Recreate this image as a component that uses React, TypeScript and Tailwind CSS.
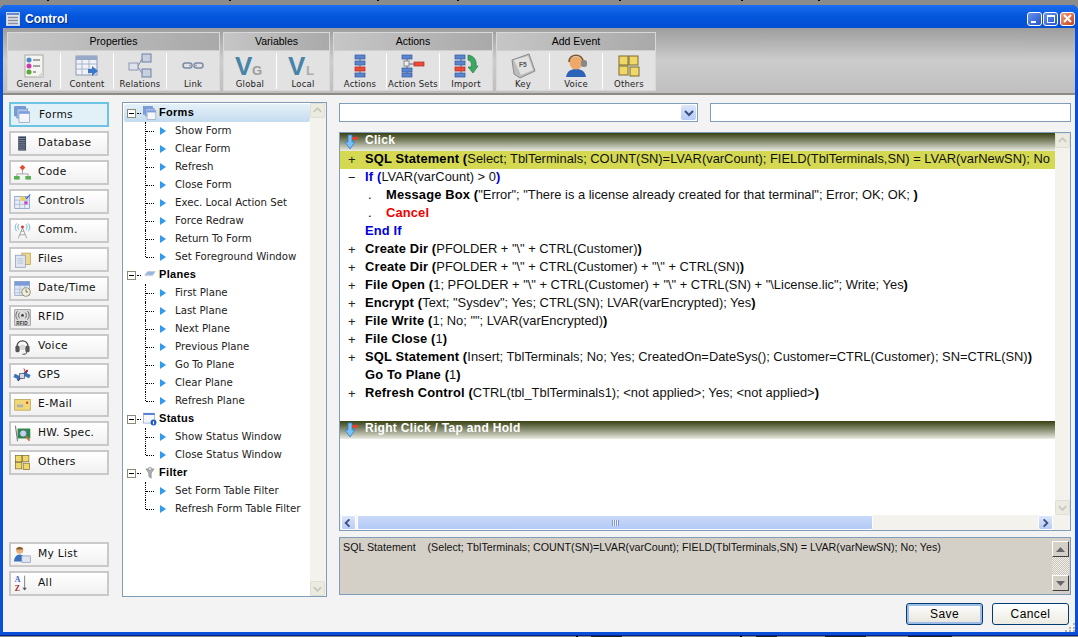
import React from "react";

const Ic = ({ s = 24, children }: { s?: number; children: React.ReactNode }) => (
  <svg width={s} height={s} viewBox="0 0 24 24" className="shrink-0 overflow-visible">{children}</svg>
);

const Bar = ({ x, y, w = 10, c = "#5b86cf" }: { x: number; y: number; w?: number; c?: string }) => (
  <rect x={x} y={y} width={w} height="4" fill={c} stroke={c === "#5b86cf" ? "#34589c" : "#b02a20"} strokeWidth="0.7" />
);

const icons: Record<string, React.ReactNode> = {
  general: (
    <Ic>
      <rect x="3" y="1" width="18" height="22" fill="#f4f4f0" stroke="#a8a8a0" />
      <circle cx="7" cy="6" r="2.5" fill="#4a8ac8" /><circle cx="7" cy="12" r="2.5" fill="#d03aa8" /><circle cx="7" cy="18" r="2.5" fill="#58a838" />
      <path d="M11 6h7M11 12h7M11 18h3" stroke="#555" strokeWidth="1.2" />
      <path d="M15 23l6-6v6z" fill="#d8d8d0" />
    </Ic>
  ),
  content: (
    <Ic>
      <rect x="1" y="2" width="21" height="19" fill="#f0f2f8" stroke="#8a9ab8" />
      <rect x="1" y="2" width="21" height="4" fill="#98a8c8" />
      <path d="M1 10h21M1 15h21M7 6v15M14 6v15" stroke="#a8b4cc" />
      <path d="M13 15h4v-3l6 5-6 5v-3h-4z" fill="#3a78c8" />
    </Ic>
  ),
  relations: (
    <Ic>
      <rect x="14" y="0" width="9" height="8" fill="#c8d0e0" stroke="#6a82a8" /><rect x="1" y="9" width="9" height="7" fill="#dde2ec" stroke="#8a98b0" /><rect x="14" y="15" width="9" height="8" fill="#c8d0e0" stroke="#6a82a8" />
      <path d="M10 12L14 5M10 13l4 6" stroke="#7a8aa8" />
    </Ic>
  ),
  link: (
    <Ic>
      <rect x="2" y="9" width="9" height="5" rx="2.5" fill="none" stroke="#7a8aa8" strokeWidth="1.5" />
      <rect x="13" y="9" width="9" height="5" rx="2.5" fill="none" stroke="#7a8aa8" strokeWidth="1.5" />
      <path d="M8 11.5h8" stroke="#a0a8b8" strokeWidth="1.5" />
    </Ic>
  ),
  actions: (
    <Ic>
      <path d="M12 1v22" stroke="#4a6aa8" /><Bar x={7} y={1} /><Bar x={7} y={7} /><Bar x={7} y={13} c="#ee4a38" /><Bar x={7} y={19} />
    </Ic>
  ),
  actionsets: (
    <Ic>
      <path d="M6 1v22M6 10h8" stroke="#4a6aa8" /><Bar x={1} y={1} /><Bar x={1} y={14} /><Bar x={1} y={19} /><Bar x={13} y={8} w={10} c="#ee4a38" />
      <rect x="3" y="7" width="5" height="5" fill="#eee" stroke="#888" />
    </Ic>
  ),
  import: (
    <Ic>
      <path d="M7 1v22" stroke="#4a6aa8" /><Bar x={1} y={1} /><Bar x={1} y={7} /><Bar x={1} y={13} c="#ee4a38" /><Bar x={1} y={19} />
      <path d="M14 1c6 1 9 5 8 11l2 0-5 7-5-6h3c1-4 0-6-3-7z" fill="#3aa860" stroke="#1f7038" strokeWidth="0.6" />
    </Ic>
  ),
  key: (
    <Ic>
      <path d="M1 6L18 0l6 17-15 7-6-4z" fill="#bcbcbc" stroke="#8a8a8a" />
      <path d="M3 6L17 2l5 14-12 5z" fill="#e2e2e2" />
      <text x="8" y="13" fontSize="6.5" fontWeight="700" fill="#555" fontFamily="Liberation Sans, sans-serif">F5</text>
    </Ic>
  ),
  voice: (
    <Ic>
      <path d="M2 23c1-6 5-8 10-8s9 2 10 8z" fill="#2a62b8" />
      <circle cx="12" cy="9" r="6.5" fill="#f0a868" />
      <path d="M5 8c0-9 14-9 14 0" fill="none" stroke="#7a5a28" strokeWidth="1.6" />
      <rect x="17" y="6" width="6" height="7" rx="2.5" fill="#888" />
    </Ic>
  ),
  others: (
    <Ic>
      <rect x="2" y="2" width="9" height="9" fill="#f0d868" stroke="#7a6a30" /><rect x="12" y="2" width="9" height="9" fill="#f0d868" stroke="#7a6a30" /><rect x="2" y="12" width="9" height="9" fill="#f0d868" stroke="#7a6a30" /><rect x="13" y="13" width="9" height="9" fill="#f0d868" stroke="#7a6a30" />
    </Ic>
  ),
  vg: (
    <Ic>
      <text x="-3" y="21" fontSize="26" fontWeight="700" fill="#4684a8" fontFamily="Liberation Sans, sans-serif">V</text>
      <text x="14" y="21" fontSize="13" fontWeight="700" fill="#9c9c9c" fontFamily="Liberation Sans, sans-serif">G</text>
    </Ic>
  ),
  vl: (
    <Ic>
      <text x="-3" y="21" fontSize="26" fontWeight="700" fill="#4684a8" fontFamily="Liberation Sans, sans-serif">V</text>
      <text x="15" y="21" fontSize="13" fontWeight="700" fill="#acacac" fontFamily="Liberation Sans, sans-serif">L</text>
    </Ic>
  ),
  forms: (
    <Ic>
      <rect x="1" y="1" width="15" height="13" fill="#7a9ee0" stroke="#5a7ab8" /><rect x="4" y="4" width="15" height="13" fill="#a8c0ec" stroke="#6a8ac8" /><rect x="7" y="8" width="15" height="15" fill="#f4f6fa" stroke="#8a9ab8" /><rect x="7" y="8" width="15" height="3" fill="#7a9ee0" />
    </Ic>
  ),
  database: (
    <Ic>
      <rect x="6" y="2" width="11" height="20" fill="#3a4458" />
      <path d="M7 5h9M7 8h9M7 11h9M7 14h9M7 17h9M7 20h9" stroke="#9aa8c0" />
    </Ic>
  ),
  code: (
    <Ic>
      <path d="M12 8v6M4 18v-4h16v4" fill="none" stroke="#888" />
      <path d="M12 1l4 4-4 4-4-4z" fill="#e84a30" />
      <rect x="0" y="17" width="8" height="5" fill="#58b050" /><rect x="16" y="17" width="8" height="5" fill="#58b050" />
    </Ic>
  ),
  controls: (
    <Ic>
      <rect x="1" y="5" width="21" height="17" fill="#e8ecf6" stroke="#7a92c0" />
      <path d="M1 10h21M8 10v12M15 10v12M1 16h21" stroke="#a0b0d0" />
      <path d="M8 7l5-3 3 5-4 3z" fill="#f0d040" /><path d="M14 13l4-2 2 3-4 3z" fill="#c848c8" /><path d="M16 6l2 2 5-6" fill="none" stroke="#3a6ac8" strokeWidth="1.6" />
    </Ic>
  ),
  comm: (
    <Ic>
      <path d="M12 8L6 23M12 8l6 15M8 18h8M10 13h4" stroke="#8a8a8a" fill="none" />
      <circle cx="12" cy="7" r="2" fill="#e03020" />
      <path d="M7 3c-2 2-2 6 0 8M4 2c-3 3-3 8 0 11M17 3c2 2 2 6 0 8M20 2c3 3 3 8 0 11" fill="none" stroke="#58a8d8" strokeWidth="1.2" />
    </Ic>
  ),
  files: (
    <Ic>
      <rect x="11" y="3" width="12" height="16" fill="#f0d890" stroke="#b09848" />
      <rect x="2" y="6" width="14" height="17" fill="#dfe6f2" stroke="#8a98b4" />
      <path d="M5 11h8M5 14h8M5 17h8" stroke="#a8b4c8" />
    </Ic>
  ),
  date: (
    <Ic>
      <rect x="1" y="2" width="21" height="20" fill="#dfe6f4" stroke="#8a9ac0" /><rect x="1" y="2" width="21" height="6" fill="#7a9ad8" />
      <path d="M1 13h21M1 18h21M8 8v14M15 8v14" stroke="#aebad4" />
      <circle cx="17" cy="17" r="6" fill="#f0f0e0" stroke="#807038" /><path d="M17 13v4h3" stroke="#444" fill="none" />
    </Ic>
  ),
  rfid: (
    <Ic>
      <rect x="1" y="1" width="22" height="22" fill="#dcdcdc" stroke="#888" />
      <circle cx="12" cy="9" r="2" fill="#444" />
      <path d="M8 5c-2 2-2 6 0 8M5 3c-3 3-3 9 0 12M16 5c2 2 2 6 0 8M19 3c3 3 3 9 0 12" fill="none" stroke="#555" strokeWidth="1.2" />
      <text x="3" y="22" fontSize="6.5" fontWeight="700" fill="#333" fontFamily="Liberation Sans, sans-serif">RFID</text>
    </Ic>
  ),
  headset: (
    <Ic>
      <path d="M4 13C4 1 20 1 20 13" fill="none" stroke="#444" strokeWidth="2" />
      <rect x="2" y="11" width="6" height="9" rx="2" fill="#555" /><rect x="16" y="11" width="6" height="9" rx="2" fill="#555" />
      <path d="M18 20c0 3-4 3-6 3" fill="none" stroke="#444" strokeWidth="1.4" />
      <circle cx="12" cy="13" r="4" fill="#d8d8d8" />
    </Ic>
  ),
  gps: (
    <Ic>
      <path d="M5 19L19 5" stroke="#2a3a78" strokeWidth="3" />
      <rect x="0" y="11" width="9" height="5" transform="rotate(25 4 13)" fill="#3a70c0" /><rect x="14" y="9" width="9" height="5" transform="rotate(25 18 11)" fill="#3a70c0" />
      <path d="M14 2l2 5 4-3" fill="none" stroke="#d83020" strokeWidth="1.4" />
      <rect x="8" y="9" width="7" height="7" fill="#d8d8e0" stroke="#445" />
    </Ic>
  ),
  mail: (
    <Ic>
      <rect x="1" y="5" width="22" height="15" fill="#f0d878" stroke="#b09848" /><rect x="4" y="12" width="9" height="4" fill="#b0b0b0" /><rect x="17" y="8" width="3" height="3" fill="#d84020" />
    </Ic>
  ),
  hw: (
    <Ic>
      <path d="M2 1l3 22" stroke="#777" strokeWidth="1.5" />
      <rect x="5" y="5" width="18" height="14" fill="#2a8848" />
      <circle cx="13" cy="12" r="5" fill="#bcd4ec" stroke="#556" />
      <path d="M17 16l5 6" stroke="#c87038" strokeWidth="2.4" />
    </Ic>
  ),
  mylist: (
    <Ic>
      <circle cx="8" cy="6" r="5" fill="#e8b078" /><path d="M3 5c0-5 10-5 10 0z" fill="#806030" />
      <path d="M0 22c0-6 4-10 8-10s8 4 8 10z" fill="#3a70c0" />
      <rect x="11" y="14" width="12" height="9" fill="#dfe6f2" stroke="#8a98b4" />
    </Ic>
  ),
  az: (
    <Ic>
      <text x="1" y="10" fontSize="11" fontWeight="700" fill="#3a5ac0" fontFamily="Liberation Serif, serif">A</text>
      <text x="1" y="23" fontSize="11" fontWeight="700" fill="#a02828" fontFamily="Liberation Serif, serif">Z</text>
      <path d="M15 1v18" stroke="#555" /><path d="M12 18h6l-3 4z" fill="#555" />
    </Ic>
  ),
  plane: (
    <Ic>
      <path d="M3 12l5-6h13l-4 6z" fill="#9ab4dc" stroke="#b8c4dc" />
      <path d="M3 12h14v2H3z" fill="#c8d4e8" />
    </Ic>
  ),
  status: (
    <Ic>
      <rect x="1" y="2" width="19" height="17" fill="#f4f6fa" stroke="#7a92c8" /><rect x="1" y="2" width="19" height="3" fill="#4a78d0" />
      <circle cx="18" cy="18" r="5" fill="#1a5cc0" /><rect x="17" y="16" width="2" height="5" fill="#fff" />
    </Ic>
  ),
  filter: (
    <Ic>
      <path d="M5 5h14l-5 7v9l-4-3v-6z" fill="#b0b0b0" stroke="#777" />
      <circle cx="12" cy="5" r="3" fill="#dcdcdc" stroke="#888" />
    </Ic>
  ),
};

const ToolGroup = ({ title, w, items }: { title: string; w: string; items: [string, string][] }) => (
  <div className={`flex flex-col ${w} h-[59px] border border-[#d8d8d8] bg-[#e2e2e2]`}>
    <div className="h-[18px] bg-gradient-to-r from-[#c6c6c6] to-[#a9a9a9] border-b border-[#cfcfcf] flex items-center justify-center text-[10.5px] text-black leading-none shrink-0">
      {title}
    </div>
    <div className="flex flex-1 pt-[2px]">
      {items.map(([label, ic], i) => (
        <div key={label} className={`flex-1 flex flex-col items-center h-[36px] ${i < items.length - 1 ? "border-r border-white" : ""}`}>
          <div className="h-[25px] flex items-center shrink-0">{icons[ic]}</div>
          <div className="text-[8.5px] leading-[12px] tracking-[0.2px] text-[#222] font-['DejaVu_Sans',sans-serif] whitespace-nowrap">{label}</div>
        </div>
      ))}
    </div>
  </div>
);

const SideBtn = ({ label, ic, active, mt }: { label: string; ic: string; active?: boolean; mt?: string }) => (
  <div
    className={`w-[100px] h-[25px] border-2 flex items-center pl-[3px] gap-[6px] text-[10.7px] tracking-[0.3px] text-[#111] font-['DejaVu_Sans',sans-serif] shrink-0 ${mt ?? ""} ${
      active ? "border-[#6cc4e4] bg-[#e2f0f7]" : "border-[#c9c9c9] bg-gradient-to-b from-white to-[#f1f1f1]"
    }`}
  >
    <Ic s={17}>{(icons[ic] as React.ReactElement<{ children: React.ReactNode }>).props.children}</Ic>
    <span className={active ? "ml-[2px] pt-[2px]" : "ml-[1px]"}>{label}</span>
  </div>
);

const side: [string, string][] = [
  ["Forms", "forms"], ["Database", "database"], ["Code", "code"], ["Controls", "controls"], ["Comm.", "comm"],
  ["Files", "files"], ["Date/Time", "date"], ["RFID", "rfid"], ["Voice", "headset"], ["GPS", "gps"],
  ["E-Mail", "mail"], ["HW. Spec.", "hw"], ["Others", "others"],
];

const tree: { title: string; ic: string; items: string[] }[] = [
  { title: "Forms", ic: "forms", items: ["Show Form", "Clear Form", "Refresh", "Close Form", "Exec. Local Action Set", "Force Redraw", "Return To Form", "Set Foreground Window"] },
  { title: "Planes", ic: "plane", items: ["First Plane", "Last Plane", "Next Plane", "Previous Plane", "Go To Plane", "Clear Plane", "Refresh Plane"] },
  { title: "Status", ic: "status", items: ["Show Status Window", "Close Status Window"] },
  { title: "Filter", ic: "filter", items: ["Set Form Table Filter", "Refresh Form Table Filter"] },
];

const XpArrow = ({ dir }: { dir: "up" | "down" | "left" | "right" }) => {
  const d = { up: "M3 8l4-4 4 4", down: "M3 5l4 4 4-4", left: "M8 3L4 7l4 4", right: "M5 3l4 4-4 4" }[dir];
  return <svg width="14" height="14" viewBox="0 0 14 14"><path d={d} fill="none" stroke="currentColor" strokeWidth="2" /></svg>;
};

const PaleBtn = ({ dir }: { dir: "up" | "down" }) => (
  <div className="w-[15px] h-[15px] bg-[#ecebe2] border border-[#dfdfd4] rounded-[2px] text-[#c8c8bc] flex items-center justify-center shrink-0">
    <XpArrow dir={dir} />
  </div>
);

const BlueBtn = ({ dir }: { dir: "left" | "right" }) => (
  <div className="w-[15px] h-[15px] bg-gradient-to-b from-[#dbe6fb] to-[#b6cbf5] border border-white rounded-[2px] text-[#3e4f80] flex items-center justify-center shrink-0">
    <XpArrow dir={dir} />
  </div>
);

const TreeArrow = () => (
  <svg width="6" height="8" viewBox="0 0 6 8" className="shrink-0"><path d="M0 0l6 4-6 4z" fill="#2f9af0" /></svg>
);

const Tree = () => (
  <div className="w-[205px] h-[495px] border border-[#7f9db9] bg-white flex shrink-0">
    <div className="flex-1 flex flex-col pt-[1px] pl-[1px] text-[10.2px] leading-[18px] text-[#222] font-['DejaVu_Sans',sans-serif]">
      {tree.map((g) => (
        <div key={g.title}>
          <div className={`h-[18px] flex items-center pl-[3px] ${g.title === "Forms" ? "bg-gradient-to-b from-[#e6f1f8] to-[#c4dcee] rounded-[2px]" : ""}`}>
            <div className="w-[9px] h-[9px] border border-[#8a8a78] bg-white flex items-center justify-center shrink-0">
              <div className="w-[5px] h-[1px] bg-black" />
            </div>
            <div className="w-[4px] border-t border-dotted border-black ml-[1px]" />
            <div className="ml-[2px] w-[14px]"><Ic s={14}>{(icons[g.ic] as React.ReactElement<{ children: React.ReactNode }>).props.children}</Ic></div>
            <span className="ml-[2px] pb-[2px] font-bold text-black font-['Liberation_Sans',sans-serif] text-[11px] tracking-[0.3px]">{g.title}</span>
          </div>
          {g.items.map((t, i) => (
            <div key={t} className="h-[18px] flex items-center pl-[21px] relative">
              <div className={`absolute left-[21px] top-0 w-0 border-l border-dotted border-black ${i === g.items.length - 1 ? "h-[9px]" : "h-[18px]"}`} />
              <div className="w-[8px] border-t border-dotted border-black ml-[1px]" />
              <div className="ml-[6px]"><TreeArrow /></div>
              <span className="ml-[9px] whitespace-nowrap">{t}</span>
            </div>
          ))}
        </div>
      ))}
    </div>
    <div className="w-[16px] bg-[#f3f2ec] flex flex-col justify-between">
      <PaleBtn dir="up" />
      <PaleBtn dir="down" />
    </div>
  </div>
);

const EventHead = ({ label, mt }: { label: string; mt?: string }) => (
  <div className={`h-[18px] bg-gradient-to-b from-[#3a4212] to-[#ecece4] flex items-center relative shrink-0 ${mt ?? ""}`}>
    <svg width="16" height="16" viewBox="0 0 16 16" className="ml-[3px] shrink-0">
      <path d="M5 1h4v7h3l-5 7-5-7h3z" fill="#7cc0f4" stroke="#2a80d8" strokeWidth="0.8" />
      <rect x="9" y="3" width="6" height="2.5" fill="#e8402c" />
    </svg>
    <span className="ml-[6px] pb-[4px] font-bold text-white text-[12px] tracking-[0.3px]">{label}</span>
  </div>
);

type Row = { sign?: string; indent?: boolean; name: string; color?: string; args?: string; close?: boolean; hl?: boolean; pColor?: string };

const rows: Row[] = [
  { sign: "+", name: "SQL Statement", args: "Select; TblTerminals; COUNT(SN)=LVAR(varCount); FIELD(TblTerminals,SN) = LVAR(varNewSN); No", hl: true },
  { sign: "−", name: "If", color: "text-[#0000e0]", args: "LVAR(varCount) > 0", close: true, pColor: "text-[#0000e0]" },
  { indent: true, name: "Message Box", args: "\"Error\"; \"There is a license already created for that terminal\"; Error; OK; OK; ", close: true },
  { indent: true, name: "Cancel", color: "text-[#f00000]" },
  { name: "End If", color: "text-[#0000e0]" },
  { sign: "+", name: "Create Dir", args: "PFOLDER + \"\\\" + CTRL(Customer)", close: true },
  { sign: "+", name: "Create Dir", args: "PFOLDER + \"\\\" + CTRL(Customer) + \"\\\" + CTRL(SN)", close: true },
  { sign: "+", name: "File Open", args: "1; PFOLDER + \"\\\" + CTRL(Customer) + \"\\\" + CTRL(SN) + \"\\License.lic\"; Write; Yes", close: true },
  { sign: "+", name: "Encrypt", args: "Text; \"Sysdev\"; Yes; CTRL(SN); LVAR(varEncrypted); Yes", close: true },
  { sign: "+", name: "File Write", args: "1; No; \"\"; LVAR(varEncrypted)", close: true },
  { sign: "+", name: "File Close", args: "1", close: true },
  { sign: "+", name: "SQL Statement", args: "Insert; TblTerminals; No; Yes; CreatedOn=DateSys(); Customer=CTRL(Customer); SN=CTRL(SN)", close: true },
  { name: "Go To Plane", args: "1", close: true },
  { sign: "+", name: "Refresh Control", args: "CTRL(tbl_TblTerminals1); <not applied>; Yes; <not applied>", close: true },
];

const CodeRow = ({ r }: { r: Row }) => (
  <div className={`h-[18px] flex items-center whitespace-nowrap overflow-hidden shrink-0 pb-[2px] ${r.hl ? "bg-[#d5d952]" : ""}`}>
    <span className="w-[25px] pl-[8px] text-[13px] leading-none shrink-0 text-[#222]">{r.sign}</span>
    {r.indent && <span className="w-[21px] pl-[3px] shrink-0">.</span>}
    <span className={`font-bold tracking-[0.15px] ${r.color ?? "text-black"}`}>
      {r.name}
      {r.args !== undefined && <span className={r.pColor ?? ""}> (</span>}
    </span>
    {r.args !== undefined && <span className="text-[#111] whitespace-pre">{r.args}</span>}
    {r.close && <span className={`font-bold ${r.pColor ?? "text-black"}`}>)</span>}
  </div>
);

export default function App() {
  return (
    <div className="w-[1078px] h-[637px] overflow-hidden flex flex-col bg-[#8b8b8b] font-['Liberation_Sans',sans-serif] relative">
      <div className="h-[5px] bg-[#8b8b8b] shrink-0 relative">
        <div className="absolute top-0 left-[47px] w-[2px] h-[1px] bg-black" />
        <div className="absolute top-0 left-[229px] w-[2px] h-[1px] bg-black" />
        <div className="absolute top-0 left-[377px] w-[2px] h-[1px] bg-black" />
        <div className="absolute top-0 left-[457px] w-[2px] h-[1px] bg-black" />
        <div className="absolute top-0 left-[619px] w-[2px] h-[1px] bg-black" />
        <div className="absolute top-0 left-[741px] w-[2px] h-[1px] bg-black" />
        <div className="absolute top-0 left-[818px] w-[2px] h-[1px] bg-black" />
      </div>
      <div className="flex-1 flex flex-col min-h-0 bg-[#0a4fd8] rounded-t-[6px] pb-[3px] px-[3px] border-b border-[#08208a]">
        <div className="-mx-[3px] h-[23px] bg-gradient-to-b from-[#1a6cf0] via-[#0356dc] to-[#0350d4] flex items-center shrink-0 rounded-t-[6px] pl-[6px] pr-[3px] pt-[4px]">
          <svg width="14" height="14" viewBox="0 0 14 14" className="shrink-0">
            <rect x="0.5" y="0.5" width="13" height="13" fill="#e4e6ee" stroke="#c8d4f0" />
            <rect x="1" y="1" width="12" height="2" fill="#6a88c8" />
            <path d="M2 5.5h10M2 8.5h10M2 11.5h10" stroke="#8a8e9a" strokeWidth="1.5" />
          </svg>
          <span className="ml-[5px] text-white font-bold text-[12px] [text-shadow:1px_1px_0_#0a2a80]">Control</span>
          <div className="ml-auto flex gap-[1px]">
            <div className="w-[15px] h-[14px] rounded-[3px] border border-white bg-gradient-to-br from-[#6a94ee] to-[#2450c8] flex items-end pb-[2px] pl-[3px]"><div className="w-[5px] h-[2px] bg-white" /></div>
            <div className="w-[15px] h-[14px] rounded-[3px] border border-white bg-gradient-to-br from-[#6a94ee] to-[#2450c8] flex items-center justify-center"><div className="w-[8px] h-[8px] border border-white border-t-2" /></div>
            <div className="ml-[1px] w-[15px] h-[14px] rounded-[3px] border border-white bg-gradient-to-br from-[#ec9c7c] to-[#c83c14] flex items-center justify-center">
              <svg width="9" height="9" viewBox="0 0 9 9"><path d="M1 1l7 7M8 1L1 8" stroke="#fff" strokeWidth="2" /></svg>
            </div>
          </div>
        </div>

        <div className="h-[67px] bg-gradient-to-b from-[#9e9e9e] via-[#cccccc] to-[#bfbfbf] border-b-2 border-[#8e8b85] flex gap-[3px] pl-[4px] pt-[4px] shrink-0">
          <ToolGroup title="Properties" w="w-[213px]" items={[["General", "general"], ["Content", "content"], ["Relations", "relations"], ["Link", "link"]]} />
          <ToolGroup title="Variables" w="w-[107px]" items={[["Global", "vg"], ["Local", "vl"]]} />
          <ToolGroup title="Actions" w="w-[160px]" items={[["Actions", "actions"], ["Action Sets", "actionsets"], ["Import", "import"]]} />
          <ToolGroup title="Add Event" w="w-[160px]" items={[["Key", "key"], ["Voice", "voice"], ["Others", "others"]]} />
        </div>

        <div className="flex-1 min-h-0 bg-[#f3f3f3] flex pl-[6px] pt-[7px] relative">
          <div className="w-[100px] flex flex-col gap-[4px] shrink-0">
            {side.map(([l, ic], i) => <SideBtn key={l} label={l} ic={ic} active={i === 0} />)}
            <SideBtn label="My List" ic="mylist" mt="mt-[63px]" />
            <SideBtn label="All" ic="az" />
          </div>
          <div className="ml-[13px]"><Tree /></div>

          <div className="ml-[12px] w-[732px] flex flex-col">
            <div className="flex gap-[12px] pt-[1px]">
              <div className="w-[359px] h-[19px] border border-[#7f9db9] bg-white flex justify-end items-center pr-[1px]">
                <div className="w-[15px] h-[15px] bg-gradient-to-b from-[#dbe6fb] to-[#b6cbf5] rounded-[2px] text-[#3e4f80] flex items-center justify-center"><XpArrow dir="down" /></div>
              </div>
              <div className="w-[361px] h-[19px] border border-[#7f9db9] bg-white" />
            </div>

            <div className="mt-[10px] h-[399px] border border-[#7f9db9] bg-white flex flex-col">
              <div className="flex flex-1 min-h-0">
                <div className="flex-1 min-w-0 flex flex-col text-[12.9px] overflow-hidden">
                  <EventHead label="Click" />
                  {rows.map((r, i) => <CodeRow key={i} r={r} />)}
                  <EventHead label="Right Click / Tap and Hold" mt="mt-[18px]" />
                </div>
                <div className="w-[15px] bg-[#f3f2ec] flex flex-col justify-between shrink-0">
                  <PaleBtn dir="up" />
                  <PaleBtn dir="down" />
                </div>
              </div>
              <div className="h-[15px] bg-[#f3f2ec] flex items-center pl-[1px] pr-[17px] shrink-0">
                <BlueBtn dir="left" />
                <div className="w-[516px] h-[15px] ml-[1px] bg-gradient-to-b from-[#c8d8f8] to-[#b4caf6] border border-white rounded-[2px] flex items-center justify-center">
                  <div className="w-[7px] h-[6px] bg-[repeating-linear-gradient(90deg,#8098d8_0,#8098d8_1px,#eef2fc_1px,#eef2fc_2px)]" />
                </div>
                <div className="flex-1" />
                <BlueBtn dir="right" />
              </div>
            </div>

            <div className="mt-[6px] h-[58px] border border-[#7f9db9] bg-[#d4d0c8] flex shrink-0">
              <div className="flex-1 pl-[3px] pt-[2px] text-[10.7px] leading-[15px] text-[#111] whitespace-pre">
                {"SQL Statement    (Select; TblTerminals; COUNT(SN)=LVAR(varCount); FIELD(TblTerminals,SN) = LVAR(varNewSN); No; Yes)"}
              </div>
              <div className="w-[17px] mr-[1px] my-[3px] flex flex-col justify-between bg-[repeating-conic-gradient(#f0efe8_0_25%,#c8c4bc_0_50%)] bg-[length:2px_2px]">
                <div className="h-[16px] bg-[#d4d0c8] border border-t-white border-l-white border-r-[#404040] border-b-[#404040] flex items-center justify-center">
                  <svg width="9" height="5" viewBox="0 0 9 5"><path d="M4.5 0L9 5H0z" fill="#666" /></svg>
                </div>
                <div className="h-[16px] bg-[#d4d0c8] border border-t-white border-l-white border-r-[#404040] border-b-[#404040] flex items-center justify-center">
                  <svg width="9" height="5" viewBox="0 0 9 5"><path d="M4.5 5L9 0H0z" fill="#666" /></svg>
                </div>
              </div>
            </div>

            <div className="flex justify-end gap-[9px] pr-[2px] mt-[8px] text-[12px] tracking-[0.4px] text-black">
              <div className="w-[77px] h-[22px] rounded-[3px] border border-[#003c74] bg-gradient-to-b from-white to-[#e6e4da] shadow-[inset_0_0_0_2px_#9dbde8] flex items-center justify-center">Save</div>
              <div className="w-[77px] h-[22px] rounded-[3px] border border-[#003c74] bg-gradient-to-b from-white to-[#ecebe2] flex items-center justify-center">Cancel</div>
            </div>
          </div>

          <svg width="10" height="10" viewBox="0 0 10 10" className="absolute right-0 bottom-0">
            <path d="M8 1h2v2H8zM4 5h2v2H4zM8 5h2v2H8zM0 8h2v2H0zM4 8h2v2H4zM8 8h2v2H8z" fill="#b4b4ac" />
          </svg>
        </div>
      </div>
      <div className="h-[1px] bg-[#8b8b8b] shrink-0 relative">
        <div className="absolute top-0 left-[576px] w-[2px] h-[1px] bg-black" />
        <div className="absolute top-0 left-[591px] w-[31px] h-[1px] bg-[#222]" />
        <div className="absolute top-0 left-[740px] w-[2px] h-[1px] bg-black" />
        <div className="absolute top-0 left-[756px] w-[21px] h-[1px] bg-[#222]" />
        <div className="absolute top-0 left-[825px] w-[41px] h-[1px] bg-[#222]" />
        <div className="absolute top-0 left-[908px] w-[44px] h-[1px] bg-[#222]" />
      </div>
    </div>
  );
}
